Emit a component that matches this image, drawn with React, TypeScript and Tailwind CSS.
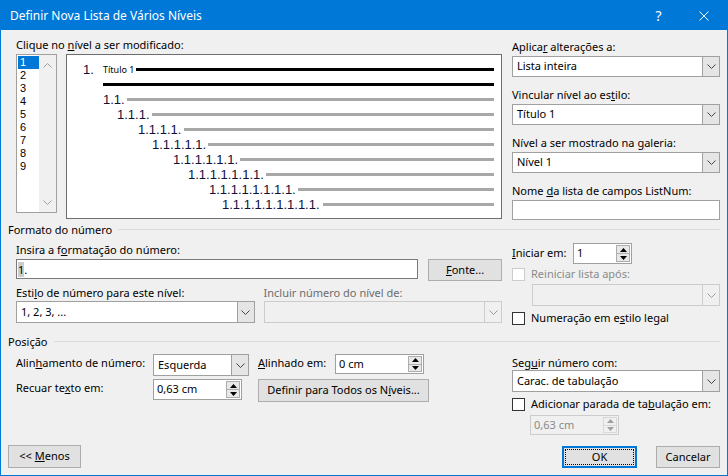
import React from "react";

const Chevron = ({ color = "#444444" }: { color?: string }) => (
  <svg width="9" height="5" viewBox="0 0 9 5">
    <polyline points="0.5,0.5 4.5,4.5 8.5,0.5" fill="none" stroke={color} strokeWidth="1" />
  </svg>
);

const ChevronUp = ({ color = "#a0a0a0" }: { color?: string }) => (
  <svg width="9" height="5" viewBox="0 0 9 5">
    <polyline points="0.5,4.5 4.5,0.5 8.5,4.5" fill="none" stroke={color} strokeWidth="1" />
  </svg>
);

function Select({ text, className, disabled }: { text?: string; className: string; disabled?: boolean }) {
  return (
    <div
      className={`flex border ${disabled ? "border-[#cccccc] bg-[#f0f0f0]" : "border-[#a0a0a0] bg-white"} ${className}`}
    >
      <div className="flex-1 flex items-center pl-[4px] whitespace-nowrap">{text}</div>
      <div
        className={`w-[17px] flex items-center justify-center border-l ${
          disabled ? "border-[#cccccc] bg-[#f0f0f0]" : "border-[#a0a0a0] bg-[#e5e5e5]"
        }`}
      >
        <Chevron color={disabled ? "#9a9a9a" : "#444444"} />
      </div>
    </div>
  );
}

function Spin({ text, className, disabled }: { text: string; className: string; disabled?: boolean }) {
  const tri = disabled ? "#a0a0a0" : "#000000";
  return (
    <div
      className={`flex border ${
        disabled ? "border-[#cccccc] bg-[#f0f0f0] text-[#8a8a8a]" : "border-[#a0a0a0] bg-white"
      } ${className}`}
    >
      <div className="flex-1 flex items-center pl-[3px] whitespace-nowrap">{text}</div>
      <div className="w-[16px] flex flex-col p-[1px]">
        <div
          className={`flex-1 flex items-center justify-center border ${
            disabled ? "border-[#d8d8d8] bg-[#f0f0f0]" : "border-[#adadad] bg-[#e8e8e8]"
          }`}
        >
          <svg width="7" height="4" viewBox="0 0 7 4">
            <polygon points="0,4 7,4 3.5,0" fill={tri} />
          </svg>
        </div>
        <div
          className={`flex-1 flex items-center justify-center border border-t-0 ${
            disabled ? "border-[#d8d8d8] bg-[#f0f0f0]" : "border-[#adadad] bg-[#e8e8e8]"
          }`}
        >
          <svg width="7" height="4" viewBox="0 0 7 4">
            <polygon points="0,0 7,0 3.5,4" fill={tri} />
          </svg>
        </div>
      </div>
    </div>
  );
}

function Check({ disabled }: { disabled?: boolean }) {
  return (
    <div
      className={`w-[13px] h-[13px] border ${disabled ? "border-[#cccccc]" : "border-[#333333]"} bg-white shrink-0`}
    />
  );
}

function Btn({ children, className }: { children: React.ReactNode; className: string }) {
  return (
    <div
      className={`flex items-center justify-center border border-[#adadad] bg-[#e1e1e1] whitespace-nowrap ${className}`}
    >
      {children}
    </div>
  );
}

function Label({ children, className = "" }: { children: React.ReactNode; className?: string }) {
  return <div className={`h-[15px] leading-[15px] whitespace-nowrap ${className}`}>{children}</div>;
}

function SectionTitle({ text }: { text: string }) {
  return (
    <div className="flex items-center h-[15px]">
      <span className="leading-[15px] whitespace-nowrap">{text}</span>
      <div className="flex-1 h-px bg-[#dcdcdc] ml-[6px]" />
    </div>
  );
}

const previewRows = [
  { text: "1.1.", pl: "pl-[36px]", w: "w-[24px]" },
  { text: "1.1.1.", pl: "pl-[50px]", w: "w-[35px]" },
  { text: "1.1.1.1.", pl: "pl-[71px]", w: "w-[46px]" },
  { text: "1.1.1.1.1.", pl: "pl-[85px]", w: "w-[56px]" },
  { text: "1.1.1.1.1.1.", pl: "pl-[106px]", w: "w-[67px]" },
  { text: "1.1.1.1.1.1.1.", pl: "pl-[121px]", w: "w-[78px]" },
  { text: "1.1.1.1.1.1.1.1.", pl: "pl-[142px]", w: "w-[89px]" },
  { text: "1.1.1.1.1.1.1.1.1.", pl: "pl-[155px]", w: "w-[101px]" },
];

export default function App() {
  return (
    <div className="w-[728px] h-[476px] border border-[#0078d7] bg-[#f0f0f0] flex flex-col text-[11px] text-black [font-family:'Noto_Sans',sans-serif] overflow-hidden">
      {/* Title bar */}
      <div className="h-[29px] bg-[#0078d7] flex items-center text-white shrink-0">
        <div className="pl-[9px] text-[12px] whitespace-nowrap">Definir Nova Lista de Vários Níveis</div>
        <div className="ml-auto w-[45px] h-full flex items-center justify-center text-[14px]">?</div>
        <div className="w-[46px] h-full flex items-center justify-center">
          <svg width="10" height="10" viewBox="0 0 10 10">
            <path d="M0.5 0.5 L9.5 9.5 M9.5 0.5 L0.5 9.5" stroke="#ffffff" strokeWidth="1" />
          </svg>
        </div>
      </div>

      {/* Body */}
      <div className="flex-1 flex flex-col px-[7px] pb-[7px]">
        {/* Top row */}
        <div className="ml-[8px] pt-[7px] flex">
          <div className="w-[486px]">
            <Label>
              Clique no <u>n</u>ível a ser modificado:
            </Label>
            <div className="mt-[2px] flex items-start">
              {/* Level listbox */}
              <div className="w-[41px] h-[159px] border border-[#a0a0a0] bg-white flex">
                <div className="w-[22px] pt-[1px] pl-[1px] flex flex-col">
                  {["1", "2", "3", "4", "5", "6", "7", "8", "9"].map((n) => (
                    <div
                      key={n}
                      className={`h-[13px] leading-[13px] pl-[2px] text-[11px] [font-family:'Liberation_Sans',Arial,sans-serif] ${
                        n === "1" ? "bg-[#0078d7] text-white" : ""
                      }`}
                    >
                      {n}
                    </div>
                  ))}
                </div>
                <div className="w-[17px] bg-[#f0f0f0] flex flex-col justify-between">
                  <div className="h-[20px] flex items-center justify-center">
                    <ChevronUp />
                  </div>
                  <div className="h-[20px] flex items-center justify-center">
                    <Chevron color="#a0a0a0" />
                  </div>
                </div>
              </div>
              {/* Preview */}
              <div className="ml-[9px] w-[436px] h-[165px] border border-[#6e6e6e] bg-white pt-[7px] pr-[7px] [font-family:'Liberation_Sans',Arial,sans-serif]">
                <div className="h-[15px] flex items-center pl-[16px]">
                  <span className="w-[20px] text-[13px] leading-[15px] text-[#10103a]">1.</span>
                  <span className="w-[33px] text-[9px] leading-[15px] whitespace-nowrap [font-family:'Noto_Sans',sans-serif]">
                    Título 1
                  </span>
                  <div className="flex-1 h-[3px] bg-black" />
                </div>
                <div className="h-[15px] flex items-center pl-[36px]">
                  <div className="flex-1 h-[3px] bg-black" />
                </div>
                {previewRows.map((r) => (
                  <div key={r.text} className={`h-[15px] flex items-center ${r.pl}`}>
                    <span className={`${r.w} text-[13px] leading-[15px] whitespace-nowrap text-[#10103a]`}>
                      {r.text}
                    </span>
                    <div className="flex-1 h-[3px] bg-[#a8a8a8]" />
                  </div>
                ))}
              </div>
            </div>
          </div>

          <div className="ml-[10px] w-[208px] pt-[2px]">
            <Label>
              Aplica<u>r</u> alterações a:
            </Label>
            <Select text="Lista inteira" className="mt-[2px] h-[21px]" />
            <Label className="mt-[10px]">
              Vincular nível ao es<u>t</u>ilo:
            </Label>
            <Select text="Título 1" className="mt-[2px] h-[21px]" />
            <Label className="mt-[10px]">
              Nível a ser mostrado na <u>g</u>aleria:
            </Label>
            <Select text="Nível 1" className="mt-[2px] h-[21px]" />
            <Label className="mt-[10px]">
              Nome <u>d</u>a lista de campos ListNum:
            </Label>
            <div className="mt-[2px] h-[20px] border border-[#a0a0a0] bg-white" />
          </div>
        </div>

        {/* Formato do número */}
        <div className="mt-[2px]">
          <SectionTitle text="Formato do número" />
        </div>
        <div className="ml-[8px] flex items-start">
          <div className="w-[486px] pt-[5px]">
            <Label>
              Insira a f<u>o</u>rmatação do número:
            </Label>
            <div className="mt-[2px] flex items-start">
              <div className="w-[403px] h-[20px] border border-[#7a7a7a] bg-white flex items-center pl-[1px]">
                <span className="bg-[#cccccc] leading-[15px]">1</span>
                <span className="leading-[15px]">.</span>
              </div>
              <Btn className="ml-[10px] w-[74px] h-[22px]">
                <span>
                  <u>F</u>onte...
                </span>
              </Btn>
            </div>
            <div className="mt-[4px] flex gap-[9px]">
              <div className="w-[239px]">
                <Label>
                  Esti<u>l</u>o de número para este nível:
                </Label>
                <Select text="1, 2, 3, ..." className="mt-[1px] h-[22px]" />
              </div>
              <div className="w-[239px]">
                <Label className="text-[#6d6d6d]">Incluir número do nível de:</Label>
                <Select disabled className="mt-[1px] h-[22px]" />
              </div>
            </div>
          </div>

          <div className="ml-[10px] w-[208px] pt-[6px]">
            <div className="flex items-center">
              <div className="w-[61px] whitespace-nowrap">
                <u>I</u>niciar em:
              </div>
              <Spin text="1" className="w-[59px] h-[21px]" />
            </div>
            <div className="mt-[3px] h-[15px] flex items-center gap-[6px]">
              <Check disabled />
              <span className="text-[#8a8a8a] whitespace-nowrap">Reiniciar lista após:</span>
            </div>
            <Select disabled className="mt-[2px] ml-[20px] w-[188px] h-[22px]" />
            <div className="mt-[5px] h-[15px] flex items-center gap-[6px]">
              <Check />
              <span className="whitespace-nowrap">
                Numeração em e<u>s</u>tilo legal
              </span>
            </div>
          </div>
        </div>

        {/* Posição */}
        <div className="mt-[8px]">
          <SectionTitle text="Posição" />
        </div>
        <div className="ml-[8px] flex items-start">
          <div className="w-[486px] pt-[5px]">
            <div className="flex items-start">
              <div className="w-[137px] mt-[1px] leading-[15px] whitespace-nowrap">
                Alin<u>h</u>amento de número:
              </div>
              <Select text="Esquerda" className="w-[96px] h-[22px]" />
              <div className="ml-[9px] w-[77px] mt-[1px] leading-[15px] whitespace-nowrap">
                <u>A</u>linhado em:
              </div>
              <Spin text="0 cm" className="w-[89px] h-[20px]" />
            </div>
            <div className="mt-[3px] flex items-start">
              <div className="w-[137px] mt-[1px] leading-[15px] whitespace-nowrap">
                Recuar te<u>x</u>to em:
              </div>
              <Spin text="0,63 cm" className="w-[89px] h-[21px]" />
              <Btn className="ml-[16px] w-[171px] h-[23px]">
                <span>
                  Definir para Todos os N<u>í</u>veis...
                </span>
              </Btn>
            </div>
          </div>

          <div className="ml-[10px] w-[208px] pt-[6px]">
            <Label>
              Seg<u>u</u>ir número com:
            </Label>
            <Select text="Carac. de tabulação" className="h-[22px]" />
            <div className="mt-[5px] h-[15px] flex items-center gap-[6px]">
              <Check />
              <span className="whitespace-nowrap">
                Adicionar parada de ta<u>b</u>ulação em:
              </span>
            </div>
            <Spin disabled text="0,63 cm" className="mt-[3px] ml-[18px] w-[89px] h-[20px]" />
          </div>
        </div>

        {/* Bottom buttons */}
        <div className="mt-auto flex items-end">
          <Btn className="w-[73px] h-[23px]">
            <span>
              {"<< "}
              <u>M</u>enos
            </span>
          </Btn>
          <div className="ml-auto relative w-[75px] h-[22px] border-2 border-[#0078d7] bg-[#e1e1e1] flex items-center justify-center">
            <div className="absolute inset-[1px] border border-dotted border-black" />
            <span>OK</span>
          </div>
          <Btn className="ml-[19px] w-[64px] h-[22px]">
            <span>Cancelar</span>
          </Btn>
        </div>
      </div>
    </div>
  );
}
